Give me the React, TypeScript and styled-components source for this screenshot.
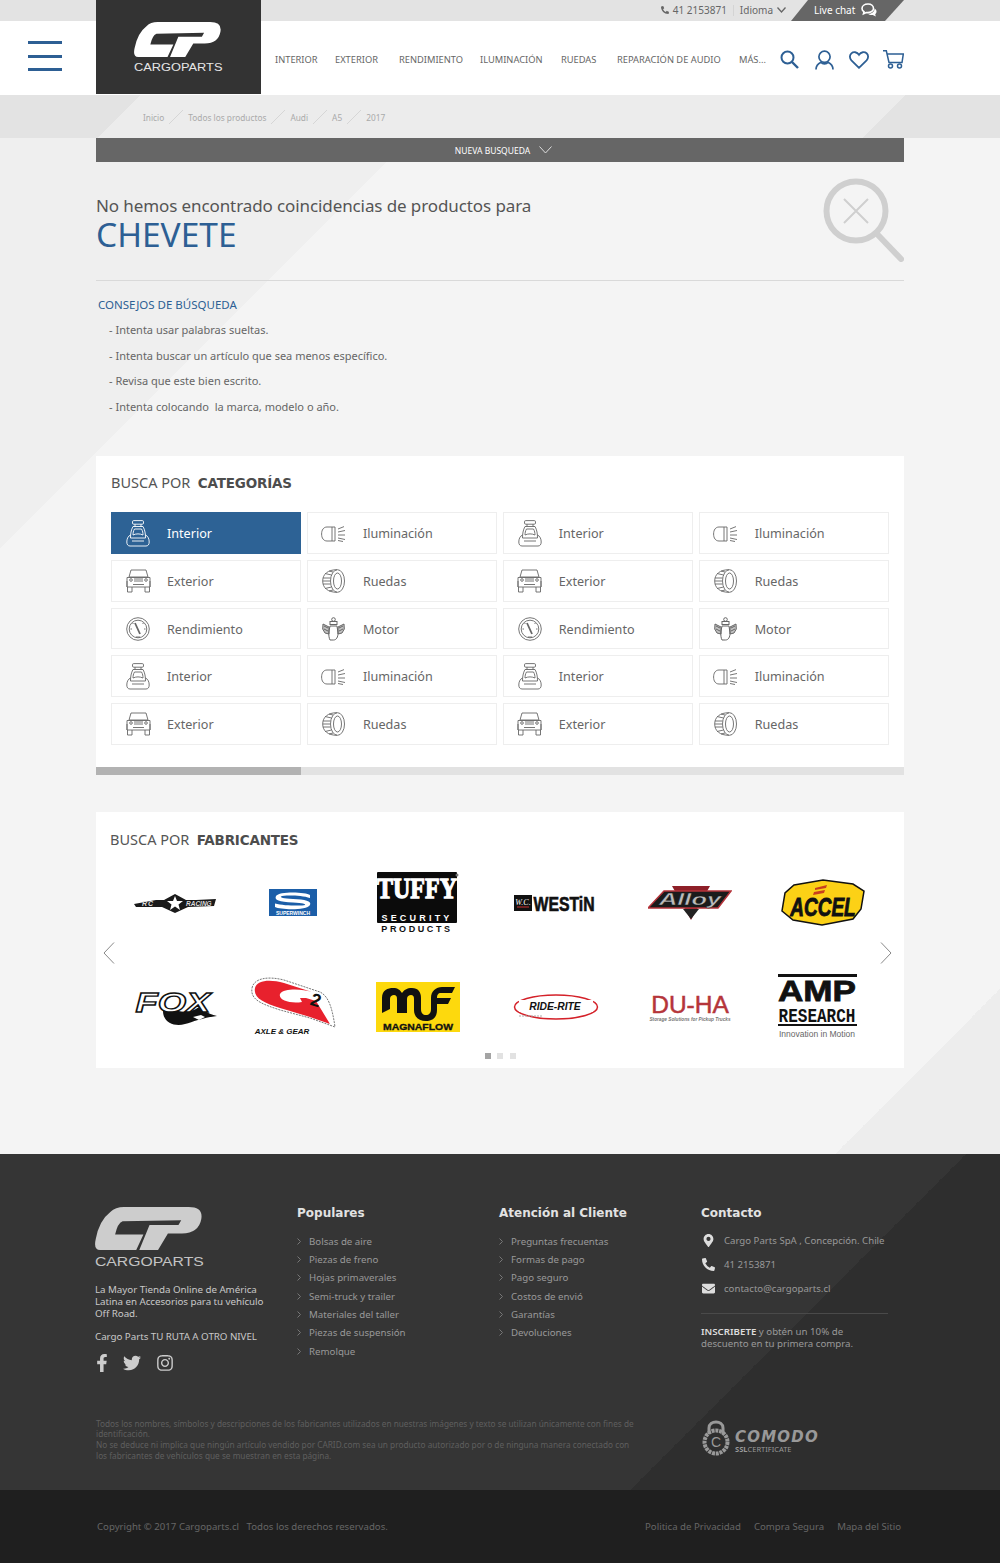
import React from "react";
import styled, { createGlobalStyle } from "styled-components";
import { FaPhoneAlt, FaFacebookF, FaTwitter, FaInstagram, FaMapMarkerAlt, FaEnvelope } from "react-icons/fa";

const BLUE = "#2d5f94";
const FONT = `"Noto Sans", "Open Sans", sans-serif`;
const HEAD = `"DejaVu Sans", "Liberation Sans", sans-serif`;

const Global = createGlobalStyle`
  html, body { margin: 0; padding: 0; background: #f4f4f4; }
  body { font-family: ${FONT}; color: #666; }
  * { box-sizing: border-box; }
  ul { list-style: none; margin: 0; padding: 0; }
`;

const Masthead = styled.header`
  display: flex; height: 95px;
  background: linear-gradient(#e3e3e3 21px, #fff 21px);
`;
const MenuCol = styled.div`
  width: 96px; padding: 41px 0 0 28px; display: flex; flex-direction: column; gap: 10.5px;
`;
const MenuBar = styled.span`width: 34px; height: 3px; background: ${BLUE};`;
const LogoBlock = styled.a`
  width: 165px; height: 94px; background: #333; padding: 22px 0 0 38px; display: block;
`;
const LogoWord = styled.div<{ $size: number; $color: string; $gap?: number }>`
  font-family: "Liberation Sans", sans-serif; font-size: ${p => p.$size}px; line-height: 1;
  margin-top: ${p => p.$gap ?? 0}px;
  color: ${p => p.$color}; transform-origin: left; transform: scaleX(1.28); white-space: nowrap;
`;
const MastRight = styled.div`flex: 1; padding-right: 96px; display: flex; flex-direction: column;`;
const TopBar = styled.div`
  height: 21px; display: flex; justify-content: flex-end; align-items: center; font-size: 10px; color: #666;
`;
const TopText = styled.span`display: flex; align-items: center; gap: 4px; padding-bottom: 1px;`;
const PhoneIcon = styled.span`display: flex; font-size: 8px;`;
const Pipe = styled.span`width: 1px; height: 11px; background: #d4d4d4; margin: 0 6px;`;
const LiveChat = styled.a`
  width: 113px; height: 21px; margin-left: 5px; background: #666; color: #fff; display: flex; align-items: center;
  gap: 6px; padding: 0 0 1px 23px; clip-path: polygon(17px 0, 100% 0, 94px 100%, 0 100%); font-size: 10px;
`;
const Nav = styled.nav`height: 74px; display: flex; align-items: center; padding: 3px 0 0 14px;`;
const NavItem = styled.a<{ $w: number }>`
  width: ${p => p.$w}px; font-size: 9.3px; color: #666; white-space: nowrap; flex: none;
`;
const NavIcons = styled.div`
  display: flex; align-items: center; margin-left: auto; gap: 15px; color: ${BLUE};
  svg:first-child { margin-right: 1px; }
  svg:nth-child(3) { margin-right: -1px; }
`;

const Band = styled.div`
  height: 43px; padding: 1px 0 0 143px; display: flex; align-items: center; font-size: 8.3px; color: #aaa;
  background: linear-gradient(135deg, #e3e3e3 99px, #ececec 99px, #ececec 640px, #e3e3e3 640px);
`;
const Sep = styled.i`
  width: 14px; height: 14px; margin: 0 5px;
  background: linear-gradient(to top left, transparent 47%, #d6d6d6 49%, #d6d6d6 51%, transparent 53%);
`;

const Main = styled.main`
  padding: 0 96px 86px;
  background:
    linear-gradient(135deg, #efefef 50%, transparent 50%) 0 0 / 410px 410px no-repeat,
    linear-gradient(135deg, transparent 50%, #ededed 50%) right bottom / 165px 165px no-repeat;
`;
const SearchBar = styled.div`
  height: 24px; background: #666; color: #fff; font-size: 8.5px; display: flex; align-items: center;
  justify-content: center; gap: 9px; padding-left: 7px;
`;
const Result = styled.section`
  height: 119px; border-bottom: 1px solid #d9d9d9; display: flex; justify-content: space-between; padding-top: 16px;
`;
const ResultText = styled.div`padding-top: 16px;`;
const NoMatch = styled.h1`margin: 0; font-size: 17px; letter-spacing: -0.1px; font-weight: 400; line-height: 24px; color: #555;`;
const Query = styled.div`font-size: 33.5px; line-height: 32px; color: ${BLUE};`;
const TipsTitle = styled.h2`
  margin: 15px 0 3px 2px; font-size: 11.5px; font-weight: 400; line-height: 18px; color: ${BLUE};
`;
const Tip = styled.li`font-size: 11px; line-height: 25.6px; color: #666; padding-left: 13px; white-space: pre;`;

const Card = styled.section<{ $top: number; $pad: string }>`
  background: #fff; margin-top: ${p => p.$top}px; padding: ${p => p.$pad}; position: relative;
`;
const CardTitle = styled.h3<{ $indent?: number }>`
  margin: 0; padding-left: ${p => p.$indent ?? 0}px; font-size: 14.5px; font-weight: 400; line-height: 20px; color: #555; white-space: pre;
  b { font-family: ${HEAD}; font-size: 13.5px; font-weight: 700; color: #4d4d4d; letter-spacing: -0.2px; }
`;
const CatGrid = styled.div`
  margin-top: 19px; display: grid; grid-template-columns: repeat(4, 190.3px); column-gap: 5.6px; grid-auto-rows: 41.6px; row-gap: 6.1px;
`;
const Cat = styled.a<{ $active?: boolean }>`
  display: flex; align-items: center; padding: 1px 0 0 12px; gap: 13px; font-size: 12.6px;
  border: 1px solid ${p => (p.$active ? "#2d6295" : "#eeeeee")};
  background: ${p => (p.$active ? "#2d6295" : "#fff")};
  color: ${p => (p.$active ? "#fff" : "#666")};
`;
const IconBox = styled.span`width: 30px; height: 30px; margin-left: -1px; margin-right: 1px; display: flex; align-items: center; justify-content: center; flex: none;`;
const Scroll = styled.div`height: 8px; background: #e2e2e2;`;
const ScrollThumb = styled.div`height: 8px; width: 205px; background: #b2b2b2;`;

const BrandGrid = styled.div`
  margin: 17px 0 0 14px; display: grid; grid-template-columns: 130px 106px 144px 132px 135px 132px;
  grid-auto-rows: 72px; row-gap: 32px;
`;
const BrandCell = styled.div`
  display: flex; align-items: center; justify-content: center;
  &:last-child { padding-right: 9px; }
`;
const Arrow = styled.button<{ $side: "left" | "right" }>`
  position: absolute; top: 130px; ${p => (p.$side === "left" ? "left: 7px" : "right: 12px")};
  background: none; border: 0; padding: 0; width: 12px; height: 22px; display: block;
`;
const Dots = styled.div`display: flex; justify-content: center; gap: 6.5px; margin-top: 10px;`;
const Dot = styled.span<{ $on?: boolean }>`width: 6px; height: 6px; background: ${p => (p.$on ? "#a4a4a4" : "#e2e2e2")};`;

const FooterMain = styled.footer`
  height: 336px; padding: 50px 0 0 95px; color: #999;
  background:
    linear-gradient(315deg, #2e2e2e 50%, transparent 50%) right bottom / 404px 336px no-repeat,
    #353535;
`;
const FootCols = styled.div`display: grid; grid-template-columns: 202px 202px 202px 187px; height: 215px;`;
const BrandCol = styled.div`padding-top: 3px;`;
const FootWord = styled.div`margin: 6px 0 16px;`;
const Lead = styled.p<{ $w: number }>`
  margin: 0 0 11px; font-size: 9.8px; letter-spacing: -0.05px; line-height: 12px; color: #c8c8c8; width: ${p => p.$w}px;
`;
const Socials = styled.div`
  display: flex; align-items: center; gap: 15px; margin-top: 7px; font-size: 18px; color: #ccc;
  svg:first-child { margin: 0 -3px 0 -2px; }
`;
const FootHead = styled.h4`
  margin: 0 0 10.5px; font-family: ${HEAD}; font-size: 12px; line-height: 18px; font-weight: 700; color: #e2e2e2;
`;
const FootLink = styled.li`
  display: flex; align-items: center; gap: 8px; height: 18.3px; font-size: 9.7px; color: #999; white-space: nowrap;
`;
const Contact = styled.li`display: flex; align-items: center; height: 24px; font-size: 9.65px; color: #999; white-space: nowrap;`;
const ContactIcon = styled.span`width: 23px; display: flex; justify-content: center; padding-right: 8px; color: #ddd; font-size: 13px;`;
const ContactList = styled.ul`margin-top: -3.5px;`;
const FootRule = styled.hr`margin: 12px 0 12px; border: 0; border-top: 1px solid #4a4a4a;`;
const Subscribe = styled.p`
  margin: 0; font-size: 9.7px; line-height: 12px; color: #999; b { color: #ddd; font-weight: 600; }
`;
const LegalRow = styled.div`display: flex; padding-left: 1px;`;
const Legal = styled.p`margin: 0; width: 606px; padding-right: 64px; font-size: 8.25px; line-height: 10.7px; color: #5f5f5f;`;
const Comodo = styled.div`display: flex; align-items: center; gap: 5px; color: #999; margin-top: -6px;`;
const ComodoText = styled.div`padding-top: 8px;`;
const ComodoName = styled.div`
  font-family: ${HEAD}; font-weight: 700; font-style: italic; font-size: 15px; line-height: 15px; letter-spacing: 1.2px;
`;
const ComodoSub = styled.div`font-size: 7.5px; line-height: 8px; b { font-weight: 700; }`;
const BottomBar = styled.div`
  height: 73px; background: #1f1f1f; padding: 0 99px 0 97px; display: flex; align-items: center;
  justify-content: space-between; font-size: 9.65px; color: #666;
`;
const BottomLinks = styled.div`display: flex; gap: 13px;`;

const CpMark = ({ w, color }: { w: number; color: string }) => (
  <svg width={w} viewBox="0 0 314 126" style={{ display: "block" }}>
    <path
      fill={color}
      fillRule="evenodd"
      d="M85 0H275Q318 0 312 35Q305 76 255 78H214L185 126H15Q-5 126 2 95Q12 40 45 15Q60 0 85 0ZM81 42L253 39L245 53H160L130 126H121L142 81H59Q66 48 81 42Z"
    />
  </svg>
);

const Chevron = ({ w = 9, h = 5, color = "#666", sw = 1.3 }: { w?: number; h?: number; color?: string; sw?: number }) => (
  <svg width={w} height={h + 1} viewBox={`0 0 ${w} ${h + 1}`} fill="none" stroke={color} strokeWidth={sw}>
    <path d={`M.5 .5L${w / 2} ${h}L${w - 0.5} .5`} />
  </svg>
);

const ChatIcon = () => (
  <svg width="16" height="14" viewBox="0 0 16 14">
    <path fill="none" stroke="#fff" strokeWidth="1.6" d="M7 1C3.500 1 1 3 1 5.400C1 6.800 1.800 7.900 3 8.700L2.500 10.800L5.200 9.500C8.800 10 12.500 8.500 12.500 5.400C12.500 3 10.500 1 7 1Z" />
    <path fill="#fff" d="M13.500 5.500C15 6.500 15.700 7.500 15.500 9C15.400 10 14.900 10.700 14.200 11.300L14.800 13.500L11.800 12C10 12.300 8 11.800 7 10.700C10 10.900 13.600 9.500 13.500 5.500Z" />
  </svg>
);

const SearchIc = () => (
  <svg width="19" height="19" viewBox="0 0 19 19" fill="none" stroke="currentColor" strokeWidth="2"><circle cx="7.500" cy="7.500" r="6" /><path d="M12 12L18 18" strokeWidth="2.400" /></svg>
);
const UserIc = () => (
  <svg width="19" height="20" viewBox="0 0 19 20" fill="none" stroke="currentColor" strokeWidth="1.700"><circle cx="9.500" cy="6.800" r="5.600" /><path d="M1 19.500C1 15.500 3.500 13.500 6 12.300C7.500 14.500 11.500 14.500 13 12.300C15.500 13.500 18 15.500 18 19.500" /></svg>
);
const HeartIc = () => (
  <svg width="20" height="18" viewBox="0 0 20 18" fill="none" stroke="currentColor" strokeWidth="1.800"><path d="M10 16.800L2.400 9.300C.3 7.100.5 4 2.400 2.300C4.500.5 8 .8 10 3.800C12 .8 15.500.5 17.600 2.300C19.500 4 19.700 7.100 17.600 9.300Z" /></svg>
);
const CartIc = () => (
  <svg width="21" height="19" viewBox="0 0 21 19" fill="none" stroke="currentColor" strokeWidth="1.500"><path d="M0 .8H3.300L6 12.500H19L20.300 4H4" /><circle cx="7.500" cy="16" r="2" /><circle cx="16.500" cy="16" r="2" /></svg>
);

const SeatIc = () => (
  <svg width="24" height="27" viewBox="0 0 24 27" fill="none" stroke="currentColor" strokeWidth=".9">
    <rect x="6.500" y=".6" width="11" height="3.600" rx="1.200" /><path d="M9 4.200V6.500M15 4.200V6.500" />
    <path d="M7 6.500H17C19 10 19.500 14 19.500 18H4.500C4.500 14 5 10 7 6.500Z" />
    <path d="M8.500 9H15.500C16.700 11 17 13 17 15C14 13.500 10 13.500 7 15C7 13 7.300 11 8.500 9Z" />
    <path d="M4.500 15C2 16 .8 19 .8 22C.8 24.500 2 26 4 26H20C22 26 23.200 24.500 23.200 22C23.200 19 22 16 19.500 15" />
    <path d="M6 21H18" />
  </svg>
);
const LightIc = () => (
  <svg width="25" height="16" viewBox="0 0 25 16" fill="none" stroke="currentColor" strokeWidth=".9">
    <path d="M14 1H6C2.500 1 .6 4 .6 8C.6 12 2.500 15 6 15H14Z" /><path d="M11 1V15" />
    <path d="M17 3L23 .6M17 6L24 4.500M17 9H24M17 12L24 13.500M17 14.500L22 15.500" />
  </svg>
);
const JeepIc = () => (
  <svg width="25" height="24" viewBox="0 0 25 24" fill="none" stroke="currentColor" strokeWidth=".9">
    <path d="M5 1H20L22 8H3Z" /><path d="M1 8.500H24V18H1Z" /><path d="M1 12V18M24 12V18" />
    <circle cx="5" cy="11" r="1.300" /><circle cx="20" cy="11" r="1.300" /><path d="M8 10H17M8 12H17M7 15.500H18" />
    <path d="M1.500 18V23H6V18M19 18V23H23.500V18" />
  </svg>
);
const TireIc = () => (
  <svg width="23" height="24" viewBox="0 0 23 24" fill="none" stroke="currentColor" strokeWidth=".9">
    <ellipse cx="15.500" cy="12" rx="7" ry="11.300" /><ellipse cx="15.500" cy="12" rx="4" ry="8" />
    <path d="M15 .7C6 .7 .7 5 .7 12C.7 19 6 23.300 15 23.300" />
    <path d="M.9 9H8.500M.9 12H8M.9 15H8.500M3 4.500L9.500 6M3 19.500L9.500 18M7 2L11 3M7 22L11 21" />
  </svg>
);
const GaugeIc = () => (
  <svg width="24" height="24" viewBox="0 0 24 24" fill="none" stroke="currentColor" strokeWidth=".9">
    <circle cx="12" cy="12" r="11.300" /><circle cx="12" cy="12" r="8.800" /><path d="M9 6L14 17" strokeWidth="1.800" />
    <path d="M6 12L4.500 12M19.500 12H18M7.500 7L6.500 6M16.500 7L17.500 6M10 20H14" />
  </svg>
);
const EngineIc = () => (
  <svg width="23" height="24" viewBox="0 0 23 24" fill="none" stroke="currentColor" strokeWidth="1">
    <circle cx="11.500" cy="2.500" r="1.800" /><rect x="8" y="4.500" width="7" height="3" />
    <path d="M8 9H15L16 16C16 20 14.500 23 11.500 23H8C7 21 6.500 18 7 14Z" />
    <path d="M7 10L1 7L.7 12L3 16L7 17ZM16 10L22 7L22.300 12L20 16L16 17Z" fill="currentColor" fillOpacity=".4" />
    <path d="M2 9L6 11M2 12L6 14M21 9L17 11M21 12L17 14" />
  </svg>
);

const cats: [React.FC, string][] = [
  [SeatIc, "Interior"], [LightIc, "Iluminación"], [SeatIc, "Interior"], [LightIc, "Iluminación"],
  [JeepIc, "Exterior"], [TireIc, "Ruedas"], [JeepIc, "Exterior"], [TireIc, "Ruedas"],
  [GaugeIc, "Rendimiento"], [EngineIc, "Motor"], [GaugeIc, "Rendimiento"], [EngineIc, "Motor"],
  [SeatIc, "Interior"], [LightIc, "Iluminación"], [SeatIc, "Interior"], [LightIc, "Iluminación"],
  [JeepIc, "Exterior"], [TireIc, "Ruedas"], [JeepIc, "Exterior"], [TireIc, "Ruedas"],
];

const logoSans = "Liberation Sans, sans-serif";
const logoSerif = "Liberation Serif, serif";

const RoughLogo = () => (
  <svg width="82" height="20" viewBox="0 0 82 20">
    <path d="M0 11L22 7H30L41 1L52 7H62L82 6L80 13L54 14L41 20L28 14L2 14Z" fill="#1a1a1a" />
    <path d="M41 3L43 8L49 8L44.500 11.500L46 17L41 13.500L36 17L37.500 11.500L33 8L39 8Z" fill="#fff" />
    <text x="8" y="13" fontFamily={logoSans} fontSize="7" fontWeight="700" fontStyle="italic" fill="#ddd" letterSpacing="1">RC</text>
    <text x="52" y="12.500" fontFamily={logoSans} fontSize="6.500" fontWeight="700" fontStyle="italic" fill="#ddd">RACING</text>
  </svg>
);
const SuperLogo = () => (
  <svg width="48" height="27" viewBox="0 0 48 27">
    <rect width="48" height="27" fill="#1b5ea8" />
    <path d="M41 6C37 3 10 2 7 7C5 11 10 13 24 13.500C34 14 37 15 36 16C34 17 15 17 6 14.500V18C12 21 38 21.500 41 16C43 12 36 10.500 24 10C14 9.500 11 8.500 12 7.500C14 6 32 6 41 9Z" fill="#fff" />
    <text x="24" y="25.500" textAnchor="middle" fontFamily={logoSans} fontSize="5" fontWeight="700" fill="#fff">SUPERWINCH</text>
  </svg>
);
const TuffyLogo = () => (
  <svg width="82" height="61" viewBox="0 0 82 61">
    <rect width="80" height="51" rx="1" fill="#0b0b0b" />
    <text x="40" y="21" textAnchor="middle" transform="scale(1 1.25)" fontFamily={logoSerif} fontSize="24" fontWeight="700" fill="#fff" stroke="#fff" strokeWidth="1">TUFFY</text>
    <text x="40" y="49" textAnchor="middle" fontFamily={logoSans} fontSize="9" fontWeight="700" fill="#fff" letterSpacing="3.200">SECURITY</text>
    <text x="40" y="60" textAnchor="middle" fontFamily={logoSans} fontSize="9" fontWeight="700" fill="#111" letterSpacing="2.600">PRODUCTS</text>
    <circle cx="80" cy="3" r="1.500" fill="#777" />
  </svg>
);
const WestinLogo = () => (
  <svg width="84" height="20" viewBox="0 0 84 20">
    <rect y="2" width="18" height="16" fill="#111" />
    <text x="9" y="12" textAnchor="middle" fontFamily={logoSerif} fontSize="8" fontStyle="italic" fill="#fff">W.C.</text>
    <path d="M3 14H15" stroke="#c33" strokeWidth="1" />
    <text x="19.500" y="14.500" transform="scale(1 1.24)" fontFamily={logoSans} fontSize="15.800" fontWeight="700" fill="#111" stroke="#111" strokeWidth=".5">WESTiN</text>
  </svg>
);
const AlloyLogo = () => (
  <svg width="84" height="34" viewBox="0 0 84 34">
    <path d="M24 0H62L43 34Z" fill="#8e1f28" />
    <path d="M16 5H83L70 22H0Z" fill="#1b1b1b" stroke="#b4333a" strokeWidth="1.500" />
    <text x="42" y="19" textAnchor="middle" fontFamily={logoSans} fontSize="17" fontWeight="700" fontStyle="italic" fill="#bbb" stroke="#111" strokeWidth=".4" textLength="62" lengthAdjust="spacingAndGlyphs">Alloy</text>
    <path d="M35 23H51L43 33Z" fill="#222" />
  </svg>
);
const AccelLogo = () => (
  <svg width="84" height="47" viewBox="0 0 84 47">
    <path d="M13 6L42 1L72 5L83 12L80 30L72 40L41 46L12 41L1 32L4 14Z" fill="#fcd116" stroke="#111" strokeWidth="1.500" />
    <path d="M34 9L46 6L45 9L34 11ZM33 13L44 11L43 14L32 16Z" fill="#c8401f" />
    <text x="42" y="28" textAnchor="middle" transform="scale(1 1.32)" fontFamily={logoSans} fontSize="19" fontWeight="700" fontStyle="italic" fill="#111" stroke="#111" strokeWidth=".7">ACCEL</text>
  </svg>
);
const FoxLogo = () => (
  <svg width="84" height="40" viewBox="0 0 84 40">
    <path d="M30 24C30 36 42 40 52 37C60 35 68 31 84 29C74 27 70 22 66 20C58 26 46 26 42 22Z" fill="#111" />
    <path d="M60 30L66 33L72 30L68 28Z" fill="#fff" />
    <text x="29.600" y="25" textAnchor="middle" transform="scale(1.35 1)" fontFamily={logoSans} fontSize="27" fontWeight="700" fontStyle="italic" fill="#fff" stroke="#111" strokeWidth="1.300">FOX</text>
  </svg>
);
const G2Logo = () => (
  <svg width="86" height="61" viewBox="0 0 86 61">
    <path d="M2 12C4 2 18 0 34 4L70 16C78 20 82 30 85 51L60 42L30 34C12 28 0 24 2 12Z" fill="#fff" stroke="#555" strokeWidth=".8" strokeDasharray="2 1" />
    <path d="M5 12C7 4 20 3 34 7L62 16C52 13 34 12 30 18C28 24 40 28 52 26L50 22H56L66 25L80 48L60 41L30 32C14 27 3 22 5 12Z" fill="#e8212d" />
    <text x="64" y="30" textAnchor="middle" fontFamily={logoSans} fontSize="18" fontWeight="700" fill="#111" transform="rotate(18 64 30)">2</text>
    <text x="32" y="58" textAnchor="middle" fontFamily={logoSans} fontSize="8" fontWeight="700" fontStyle="italic" fill="#111">AXLE &amp; GEAR</text>
  </svg>
);
const MagnaLogo = () => (
  <svg width="84" height="50" viewBox="0 0 84 50">
    <rect width="84" height="50" fill="#fdd90d" />
    <path d="M6 31V16C6 8 12 6 17 6C22 6 24 8 26 11C28 8 31 6 36 6C42 6 45 10 45 16V27C45 31 47 33 50 33C53 33 55 31 55 27V16C55 9 60 5 66 5H79L76 11H65C62 11 61 13 61 16H75L72 22H61V28C61 36 56 39 50 39C43 39 38 35 38 28V17C38 14 37 13 35 13C33 13 31 14 31 17V31H21V17C21 14 20 13 18 13C16 13 14 14 14 17V27Z" fill="#111" />
    <text x="42" y="48" textAnchor="middle" fontFamily={logoSans} fontSize="8.500" fontWeight="700" fill="#111" textLength="70" lengthAdjust="spacingAndGlyphs" stroke="#111" strokeWidth=".3">MAGNAFLOW</text>
  </svg>
);
const RideLogo = () => (
  <svg width="86" height="28" viewBox="0 0 86 28">
    <ellipse cx="43" cy="14" rx="41.500" ry="12" fill="none" stroke="#d42129" strokeWidth="1.500" />
    <rect x="6" y="7" width="74" height="12" fill="#fff" />
    <text x="42" y="15" textAnchor="middle" transform="scale(1 1.14)" fontFamily={logoSans} fontSize="10.300" fontWeight="700" fontStyle="italic" fill="#111">RIDE-RITE</text>
    <path d="M6 23H30" stroke="#aaa" strokeWidth="1" strokeDasharray="2 1" />
  </svg>
);
const DuhaLogo = () => (
  <svg width="86" height="30" viewBox="0 0 86 30">
    <text x="43" y="21" textAnchor="middle" fontFamily={logoSans} fontSize="24.500" fill="#b5353a" stroke="#b5353a" strokeWidth=".5">DU-HA</text>
    <text x="43" y="23" textAnchor="middle" transform="scale(1 1.25)" fontFamily={logoSans} fontSize="4.700" fontStyle="italic" fontWeight="700" fill="#777">Storage Solutions for Pickup Trucks</text>
  </svg>
);
const AmpLogo = () => (
  <svg width="84" height="65" viewBox="0 0 84 65">
    <rect x="1" width="79" height="3" fill="#111" />
    <text x="40" y="27" textAnchor="middle" fontFamily={logoSans} fontSize="30" fontWeight="700" fill="#111" textLength="78" lengthAdjust="spacingAndGlyphs" stroke="#111" strokeWidth=".8">AMP</text>
    <text x="40" y="37" textAnchor="middle" transform="scale(1 1.3)" fontFamily="Liberation Mono, monospace" fontSize="16" fontWeight="700" fill="#111">RESEARCH</text>
    <rect x="1" y="50" width="79" height="2" fill="#111" />
    <text x="40" y="63" textAnchor="middle" fontFamily={logoSans} fontSize="8.500" fill="#666">Innovation in Motion</text>
  </svg>
);

const brands = [RoughLogo, SuperLogo, TuffyLogo, WestinLogo, AlloyLogo, AccelLogo, FoxLogo, G2Logo, MagnaLogo, RideLogo, DuhaLogo, AmpLogo];

const popular = ["Bolsas de aire", "Piezas de freno", "Hojas primaverales", "Semi-truck y trailer", "Materiales del taller", "Piezas de suspensión", "Remolque"];
const service = ["Preguntas frecuentas", "Formas de pago", "Pago seguro", "Costos de envió", "Garantías", "Devoluciones"];

const Tick = () => (
  <svg width="4" height="7" viewBox="0 0 4 7" fill="none" stroke="#777"><path d="M.5 .5L3.500 3.500L.5 6.500" /></svg>
);

const LockIc = () => (
  <svg width="28" height="37" viewBox="0 0 28 37" fill="none" stroke="#999">
    <path d="M7 15V9C7 1 21 1 21 9V15" strokeWidth="3" />
    <circle cx="14" cy="23" r="11.500" strokeWidth="4" strokeDasharray="3 .8" />
    <circle cx="14" cy="23" r="8" fill="#2e2e2e" stroke="none" />
    <text x="14" y="28" textAnchor="middle" fontFamily={logoSans} fontSize="14" fill="#999" stroke="none">C</text>
  </svg>
);

export default function App() {
  return (
    <>
      <Global />
      <Masthead>
        <MenuCol><MenuBar /><MenuBar /><MenuBar /></MenuCol>
        <LogoBlock>
          <CpMark w={87} color="#fff" />
          <LogoWord $size={10} $color="#e6e6e6" $gap={6}>CARGOPARTS</LogoWord>
        </LogoBlock>
        <MastRight>
          <TopBar>
            <TopText><PhoneIcon><FaPhoneAlt /></PhoneIcon>41 2153871</TopText>
            <Pipe />
            <TopText>Idioma <Chevron /></TopText>
            <LiveChat>Live chat <ChatIcon /></LiveChat>
          </TopBar>
          <Nav>
            <NavItem $w={60}>INTERIOR</NavItem>
            <NavItem $w={64}>EXTERIOR</NavItem>
            <NavItem $w={81}>RENDIMIENTO</NavItem>
            <NavItem $w={81}>ILUMINACIÓN</NavItem>
            <NavItem $w={56}>RUEDAS</NavItem>
            <NavItem $w={122}>REPARACIÓN DE AUDIO</NavItem>
            <NavItem $w={30}>MÁS...</NavItem>
            <NavIcons><SearchIc /><UserIc /><HeartIc /><CartIc /></NavIcons>
          </Nav>
        </MastRight>
      </Masthead>

      <Band>
        Inicio<Sep />Todos los productos<Sep />Audi<Sep />A5<Sep />2017
      </Band>

      <Main>
        <SearchBar>NUEVA BUSQUEDA <Chevron w={13} h={7} color="#ddd" sw={1} /></SearchBar>
        <Result>
          <ResultText>
            <NoMatch>No hemos encontrado coincidencias de productos para</NoMatch>
            <Query>CHEVETE</Query>
          </ResultText>
          <svg width="81" height="84" viewBox="0 0 81 84" fill="none" stroke="#cfcfcf">
            <circle cx="33" cy="33" r="29.500" strokeWidth="6" />
            <path d="M21 21L45 45M45 21L21 45" strokeWidth="2" />
            <path d="M55 57L78 81" strokeWidth="6" strokeLinecap="round" />
          </svg>
        </Result>
        <TipsTitle>CONSEJOS DE BÚSQUEDA</TipsTitle>
        <ul>
          <Tip>- Intenta usar palabras sueltas.</Tip>
          <Tip>- Intenta buscar un artículo que sea menos específico.</Tip>
          <Tip>- Revisa que este bien escrito.</Tip>
          <Tip>- Intenta colocando  la marca, modelo o año.</Tip>
        </ul>

        <Card $top={37} $pad="16px 15px 22px">
          <CardTitle>BUSCA POR  <b>CATEGORÍAS</b></CardTitle>
          <CatGrid>
            {cats.map(([Icon, label], i) => (
              <Cat key={i} $active={i === 0}>
                <IconBox><Icon /></IconBox>
                {label}
              </Cat>
            ))}
          </CatGrid>
        </Card>
        <Scroll><ScrollThumb /></Scroll>

        <Card $top={37} $pad="17px 0 9px">
          <CardTitle $indent={14}>BUSCA POR  <b>FABRICANTES</b></CardTitle>
          <BrandGrid>
            {brands.map((Logo, i) => (
              <BrandCell key={i}><Logo /></BrandCell>
            ))}
          </BrandGrid>
          <Arrow $side="left" aria-label="Anterior">
            <svg width="12" height="22" viewBox="0 0 12 22" fill="none" stroke="#888"><path d="M11 .5L1 11L11 21.500" /></svg>
          </Arrow>
          <Arrow $side="right" aria-label="Siguiente">
            <svg width="12" height="22" viewBox="0 0 12 22" fill="none" stroke="#888"><path d="M1 .5L11 11L1 21.500" /></svg>
          </Arrow>
          <Dots><Dot $on /><Dot /><Dot /></Dots>
        </Card>
      </Main>

      <FooterMain>
        <FootCols>
          <BrandCol>
            <CpMark w={107} color="#cdcdcd" />
            <FootWord><LogoWord $size={12.300} $color="#c4c4c4">CARGOPARTS</LogoWord></FootWord>
            <Lead $w={175}>La Mayor Tienda Online de América Latina en Accesorios para tu vehículo Off Road.</Lead>
            <Lead $w={190}>Cargo Parts TU RUTA A OTRO NIVEL</Lead>
            <Socials><FaFacebookF /><FaTwitter /><FaInstagram /></Socials>
          </BrandCol>
          <div>
            <FootHead>Populares</FootHead>
            <ul>{popular.map(t => <FootLink key={t}><Tick />{t}</FootLink>)}</ul>
          </div>
          <div>
            <FootHead>Atención al Cliente</FootHead>
            <ul>{service.map(t => <FootLink key={t}><Tick />{t}</FootLink>)}</ul>
          </div>
          <div>
            <FootHead>Contacto</FootHead>
            <ContactList>
              <Contact><ContactIcon><FaMapMarkerAlt /></ContactIcon>Cargo Parts SpA , Concepción. Chile</Contact>
              <Contact><ContactIcon><FaPhoneAlt /></ContactIcon>41 2153871</Contact>
              <Contact><ContactIcon><FaEnvelope /></ContactIcon>contacto@cargoparts.cl</Contact>
            </ContactList>
            <FootRule />
            <Subscribe><b>INSCRIBETE</b> y obtén un 10% de descuento en tu primera compra.</Subscribe>
          </div>
        </FootCols>
        <LegalRow>
          <Legal>
            Todos los nombres, símbolos y descripciones de los fabricantes utilizados en nuestras imágenes y texto se utilizan únicamente con fines de identificación.<br />
            No se deduce ni implica que ningún artículo vendido por CARID.com sea un producto autorizado por o de ninguna manera conectado con los fabricantes de vehículos que se muestran en esta página.
          </Legal>
          <Comodo>
            <LockIc />
            <ComodoText>
              <ComodoName>COMODO</ComodoName>
              <ComodoSub><b>SSL</b>CERTIFICATE</ComodoSub>
            </ComodoText>
          </Comodo>
        </LegalRow>
      </FooterMain>
      <BottomBar>
        <span>Copyright © 2017 Cargoparts.cl &nbsp; Todos los derechos reservados.</span>
        <BottomLinks>
          <span>Politica de Privacidad</span>
          <span>Compra Segura</span>
          <span>Mapa del Sitio</span>
        </BottomLinks>
      </BottomBar>
    </>
  );
}
